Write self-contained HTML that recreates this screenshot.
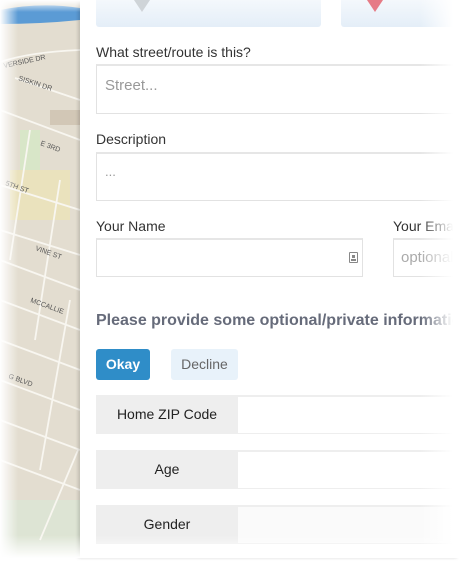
<!DOCTYPE html>
<html><head><style>
*{margin:0;padding:0;box-sizing:border-box}
body{width:459px;height:558px;overflow:hidden;background:#fff;position:relative;font-family:"Liberation Sans",sans-serif;color:#333}
.map{position:absolute;left:0;top:0;width:80px;height:558px;background:#e3ddd0}
.panel{position:absolute;left:80px;top:0;width:379px;height:558px;background:#fff;box-shadow:-2px 0 3px rgba(0,0,0,.15)}
.abs{position:absolute}
.lbl{position:absolute;font-size:14px;color:#333;white-space:nowrap}
.inp{position:absolute;border:1px solid #e2e2e2;border-top:2px solid #e6e6e6;background:#fff}
.ph{position:absolute;color:#999;font-size:15px;white-space:nowrap}
.row{position:absolute;left:96px;width:363px;height:39px;background:#fff;border-top:2px solid #eee;border-bottom:1px solid #eee}
.row .c{position:absolute;left:0;top:-2px;width:142px;height:39px;background:#eee;font-size:14px;text-align:center;line-height:39px;color:#222}
</style></head><body>
<div class="map">
<svg width="80" height="558" viewBox="0 0 80 558">
<path d="M0 10 Q40 2 80 8 L80 20 Q40 24 0 24Z" fill="#5b9bd5"/>
<rect x="50" y="110" width="30" height="15" fill="#d2c7b6"/>
<rect x="20" y="130" width="20" height="40" fill="#d8e6c8"/>
<rect x="10" y="170" width="60" height="50" fill="#ebe3b8" opacity=".8"/>
<rect x="0" y="500" width="80" height="58" fill="#dde4d4"/>
<g stroke="#f8f6f0" stroke-width="1.8" fill="none">
<path d="M0 62 Q30 52 80 50"/>
<path d="M15 78 L80 100"/>
<path d="M0 110 L80 140"/>
<path d="M0 185 L80 210"/>
<path d="M0 230 L80 255"/>
<path d="M0 260 L80 290"/>
<path d="M0 300 L80 330"/>
<path d="M0 340 L80 370"/>
<path d="M0 380 L80 410"/>
<path d="M0 420 L80 450"/>
<path d="M0 460 L80 490"/>
<path d="M30 130 L10 260"/>
<path d="M60 180 L35 340"/>
<path d="M70 300 L40 470"/>
<path d="M78 450 L40 540"/>
</g>
<g font-size="7" fill="#555" font-family="Liberation Sans">
<text x="4" y="68" transform="rotate(-12 4 68)">VERSIDE DR</text>
<text x="18" y="80" transform="rotate(18 18 80)">SISKIN DR</text>
<text x="40" y="145" transform="rotate(20 40 145)">E 3RD</text>
<text x="5" y="185" transform="rotate(20 5 185)">5TH ST</text>
<text x="35" y="250" transform="rotate(20 35 250)">VINE ST</text>
<text x="30" y="302" transform="rotate(20 30 302)">MCCALLIE</text>
<text x="8" y="378" transform="rotate(20 8 378)">G BLVD</text>
</g>
</svg>
</div>
<div class="panel"></div>
<div class="abs" style="left:96px;top:0;width:225px;height:27px;background:linear-gradient(#f4f8fc,#e4eef8);border-radius:0 0 3px 3px"></div>
<div class="abs" style="left:341px;top:0;width:118px;height:27px;background:linear-gradient(#f4f8fc,#e4eef8);border-radius:0 0 3px 3px"></div>
<div class="abs" style="left:134px;top:0;width:16px;height:12px;background:#cfd4d8;clip-path:polygon(0 0,100% 0,50% 100%)"></div>
<div class="abs" style="left:367px;top:0;width:16px;height:12px;background:#e67b86;clip-path:polygon(0 0,100% 0,50% 100%)"></div>
<div class="lbl" style="left:96px;top:44px">What street/route is this?</div>
<div class="inp" style="left:96px;top:64px;width:363px;height:50px"></div>
<div class="ph" style="left:105px;top:77px">Street...</div>
<div class="lbl" style="left:96px;top:131px">Description</div>
<div class="inp" style="left:96px;top:152px;width:363px;height:49px"></div>
<div class="ph" style="left:105px;top:164px;font-size:13px">...</div>
<div class="lbl" style="left:96px;top:218px">Your Name</div>
<div class="lbl" style="left:393px;top:218px">Your Email</div>
<div class="inp" style="left:96px;top:238px;width:267px;height:39px"></div>
<div class="abs" style="left:349px;top:252px;width:9px;height:11px;border:1px solid #888;border-radius:1px"><div style="width:3px;height:3px;background:#888;margin:2px auto 0"></div><div style="width:5px;height:2px;background:#888;margin:1px auto 0"></div></div>
<div class="inp" style="left:393px;top:238px;width:66px;height:39px"></div>
<div class="ph" style="left:401px;top:249px;color:#aaa">optional</div>
<div class="abs" style="left:96px;top:312px;font-size:16px;font-weight:bold;color:#666b7a;white-space:nowrap">Please provide some optional/private information</div>
<div class="abs" style="left:96px;top:349px;width:54px;height:31px;background:#2f8dc8;border-radius:3px;color:#fff;font-weight:bold;font-size:14px;text-align:center;line-height:31px">Okay</div>
<div class="abs" style="left:171px;top:349px;width:67px;height:31px;background:#e8f2fa;border-radius:3px;color:#666;font-size:14px;text-align:center;line-height:31px">Decline</div>
<div class="row" style="top:395px"><div class="c">Home ZIP Code</div></div>
<div class="row" style="top:450px"><div class="c">Age</div></div>
<div class="row" style="top:505px;background:#fafafa"><div class="c">Gender</div></div>
<div class="abs" style="left:420px;top:0;width:39px;height:558px;background:linear-gradient(90deg,rgba(255,255,255,0),#fff 85%)"></div>
<div class="abs" style="left:0;top:535px;width:459px;height:23px;background:linear-gradient(rgba(255,255,255,0),#fff)"></div>
<div class="abs" style="left:0;top:0;width:18px;height:558px;background:linear-gradient(90deg,#fff,rgba(255,255,255,0))"></div>
<div class="abs" style="left:0;top:0;width:80px;height:12px;background:linear-gradient(#fff,rgba(255,255,255,0))"></div>
</body></html>
